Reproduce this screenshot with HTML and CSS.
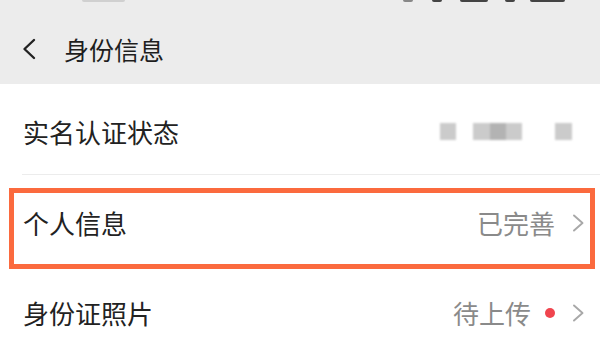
FILE: index.html
```html
<!DOCTYPE html>
<html lang="zh-CN">
<head>
<meta charset="utf-8">
<title>身份信息</title>
<link rel="stylesheet" href="styles.css">
</head>
<body>
<div class="screen">
  <div class="status">
    <span class="st st-time"></span>
    <span class="st-spacer"></span>
    <span class="st st-a"></span>
    <span class="st st-b"></span>
    <span class="st st-sig"></span>
    <span class="st st-wifi"></span>
    <span class="st st-bat"></span>
  </div>
  <div class="header">
    <svg class="back" width="16" height="22" viewBox="0 0 16 22"><polyline points="13,2 3.5,11 13,20" fill="none" stroke="#222" stroke-width="2.4" stroke-linecap="round" stroke-linejoin="round"/></svg>
    <span class="title">身份信息</span>
  </div>
  <div class="row">
    <span class="label">实名认证状态</span>
    <div class="masked">
      <span class="blk blk-1"></span>
      <span class="blk blk-2"><span class="blk-mid"></span></span>
      <span class="blk blk-3"></span>
    </div>
  </div>
  <div class="divider"></div>
  <div class="row row-marked">
    <span class="label">个人信息</span>
    <div class="value">
      <span class="value-text">已完善</span>
      <svg class="chev" width="13" height="18" viewBox="0 0 13 18"><polyline points="2,1.5 10.5,9 2,16.5" fill="none" stroke="#a8a8a8" stroke-width="1.9" stroke-linecap="round" stroke-linejoin="round"/></svg>
    </div>
    <div class="mark"></div>
  </div>
  <div class="row">
    <span class="label">身份证照片</span>
    <div class="value">
      <span class="value-text">待上传</span>
      <span class="dot"></span>
      <svg class="chev" width="13" height="18" viewBox="0 0 13 18"><polyline points="2,1.5 10.5,9 2,16.5" fill="none" stroke="#a8a8a8" stroke-width="1.9" stroke-linecap="round" stroke-linejoin="round"/></svg>
    </div>
  </div>
</div>
</body>
</html>
```
FILE: styles.css
```css
html, body {
  margin: 0;
  padding: 0;
  background: #ffffff;
}
.screen {
  width: 600px;
  height: 355px;
  overflow: hidden;
  font-family: "Noto Sans CJK SC", "Noto Sans", sans-serif;
  color: #222222;
  background: #ffffff;
}
.status {
  height: 3px;
  background: #ececec;
  display: flex;
  align-items: flex-start;
  padding-left: 82px;
}
.st {
  display: block;
  height: 2px;
  background: #444444;
  border-radius: 0 0 2px 2px;
}
.st-time { width: 43px; background: #d0d0d0; }
.st-spacer { width: 278px; }
.st-a { width: 10px; background: #888888; }
.st-b { width: 10px; margin-left: 19px; }
.st-sig { width: 28px; margin-left: 18px; }
.st-wifi { width: 10px; margin-left: 17px; }
.st-bat { width: 35px; margin-left: 15px; }
.header {
  height: 81px;
  background: #ececec;
  display: flex;
  align-items: center;
  padding-left: 21px;
  padding-top: 11px;
  box-sizing: border-box;
}
.back {
  display: block;
  margin-right: 27px;
}
.title {
  font-size: 25px;
  line-height: 30px;
  color: #1e1e1e;
}
.row {
  position: relative;
  height: 90px;
  display: flex;
  align-items: center;
  justify-content: space-between;
  padding: 5px 15px 0 23px;
  box-sizing: border-box;
}
.label {
  font-size: 26px;
  line-height: 32px;
  color: #222222;
}
.divider {
  height: 1px;
  margin-left: 22px;
  background: #ececec;
}
.masked {
  display: flex;
  align-items: center;
  gap: 17px;
  margin-right: 13px;
  filter: blur(0.8px);
}
.blk {
  display: block;
  height: 17px;
  background: #cbcbcb;
}
.blk-1 { width: 16px; }
.blk-2 {
  width: 49px;
  margin-right: 16px;
  display: flex;
  justify-content: center;
}
.blk-mid {
  display: block;
  width: 16px;
  height: 17px;
  background: #b3b3b3;
}
.blk-3 { width: 17px; }
.value {
  display: flex;
  align-items: center;
}
.value-text {
  font-size: 26px;
  line-height: 32px;
  color: #8a8a8a;
}
.dot {
  display: block;
  width: 10px;
  height: 10px;
  border-radius: 50%;
  background: #f0454e;
  margin-left: 14px;
}
.chev {
  display: block;
  margin-left: 17px;
}
.mark {
  position: absolute;
  left: 9px;
  top: 13px;
  width: 586px;
  height: 81px;
  box-sizing: border-box;
  border: 5px solid #fb6a3e;
  pointer-events: none;
}
```
